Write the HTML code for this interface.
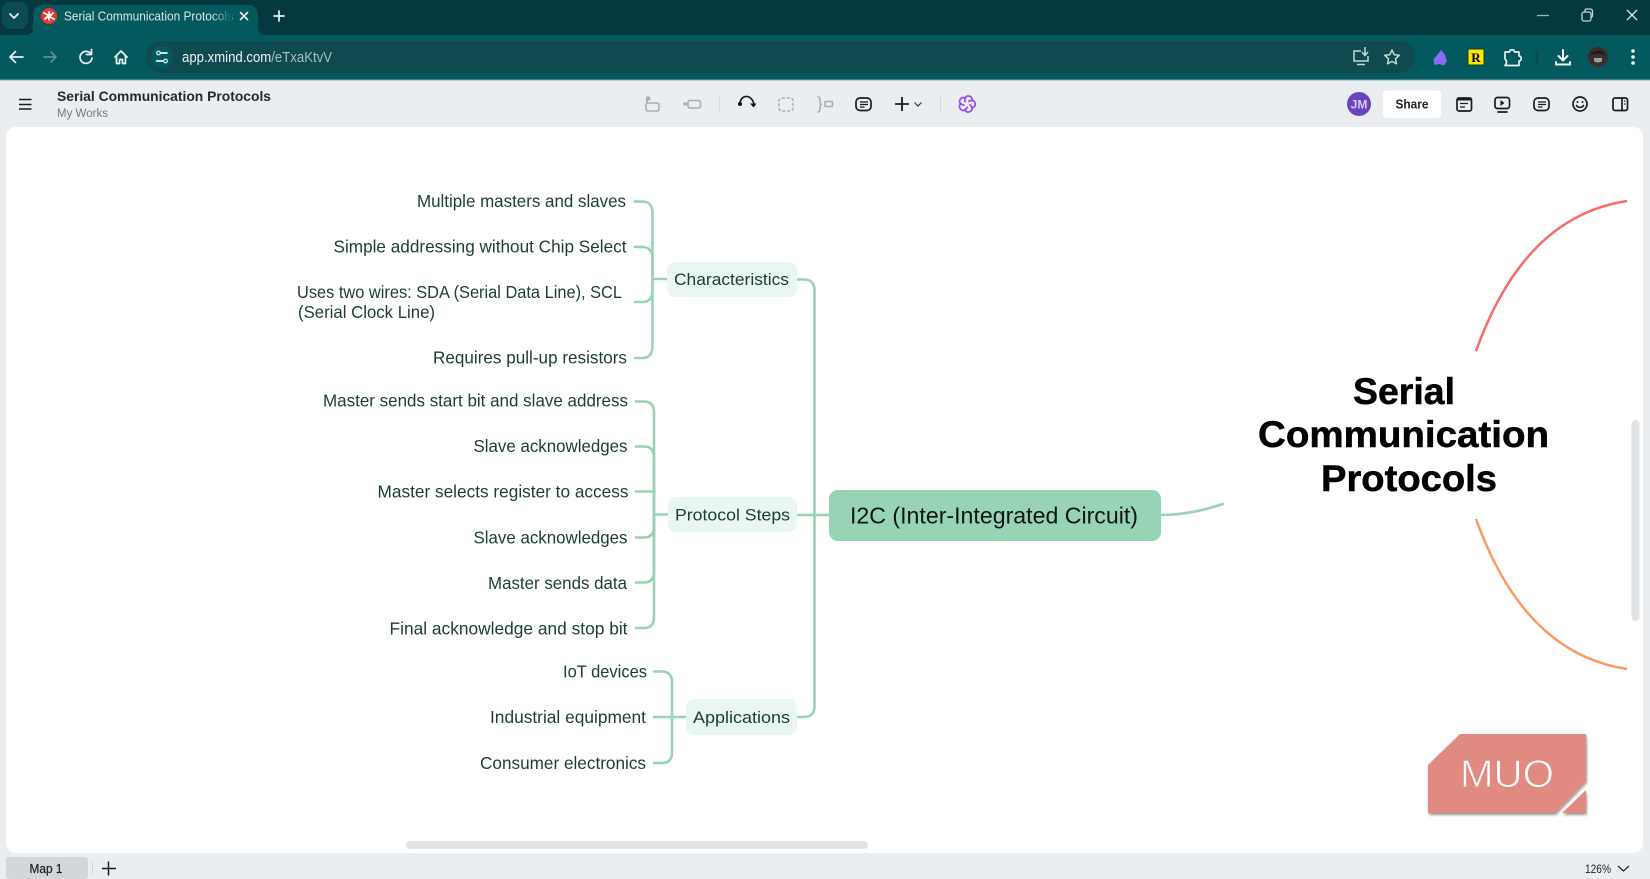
<!DOCTYPE html>
<html lang="en">
<head>
<meta charset="utf-8">
<title>Serial Communication Protocols</title>
<style>
html,body{margin:0;padding:0;width:1650px;height:879px;overflow:hidden;background:#ebeef1}
svg{display:block;font-family:"Liberation Sans",sans-serif}
.n{font-size:17.5px;fill:#1d3d33}
.b{font-size:17px;fill:#1d3d33}
.l{fill:none;stroke:#98d3b6;stroke-width:2.6;stroke-linecap:round;stroke-linejoin:round}
.g{fill:none;stroke:#a9adb0;stroke-width:1.6;stroke-linecap:round;stroke-linejoin:round}
.k{fill:none;stroke:#1b1b1b;stroke-width:1.7;stroke-linecap:round;stroke-linejoin:round}
.w{fill:none;stroke:#e9f1f1;stroke-width:1.7;stroke-linecap:round;stroke-linejoin:round}
</style>
</head>
<body>
<svg width="1650" height="879" viewBox="0 0 1650 879" xmlns="http://www.w3.org/2000/svg">
<defs>
<linearGradient id="fade" x1="0" x2="1" y1="0" y2="0"><stop offset="0" stop-color="#04595e" stop-opacity="0"/><stop offset="1" stop-color="#04595e"/></linearGradient>
<filter id="sh" x="-5%" y="-5%" width="112%" height="115%"><feDropShadow dx="1" dy="2" stdDeviation="1.2" flood-color="#000" flood-opacity=".4"/></filter>
</defs>

<!-- browser chrome -->
<rect width="1650" height="35" fill="#04393f"/>
<rect y="35" width="1650" height="45" fill="#04595e"/>
<rect y="79.5" width="1650" height="1" fill="#7fa9ab"/>
<rect x="2" y="2" width="26" height="27" rx="8" fill="#0a4c52"/>
<path d="M10 14l4 4 4-4" fill="none" stroke="#e9f1f1" stroke-width="1.8" stroke-linecap="round" stroke-linejoin="round"/>
<path d="M25 35c6 0 8-3 8-8V15c0-6 4-10 10-10h205c6 0 10 4 10 10v12c0 5 3 8 8 8z" fill="#04595e"/>
<circle cx="49" cy="16" r="8" fill="#e8392c"/>
<path d="M44 13l4 2 1 5M54 19l-4-2-1-5M45 19l3-3M50 16l3-3" fill="none" stroke="#fff" stroke-width="1.800" stroke-linecap="round"/>
<text x="64" y="20.500" font-size="12.500" fill="#d9e6e6" textLength="169" lengthAdjust="spacingAndGlyphs">Serial Communication Protocols</text>
<rect x="212" y="6" width="20" height="22" fill="url(#fade)"/>
<path d="M240.500 12.500l7 7M247.500 12.500l-7 7" class="w"/>
<path d="M279 11v10M274 16h10" class="w"/>
<path d="M1537 15.500h12" fill="none" stroke="#9ab5b7" stroke-width="1.300"/>
<rect x="1582" y="12" width="9" height="9" rx="2" fill="none" stroke="#c5d5d6" stroke-width="1.300"/>
<path d="M1585 12v-1.500c0-1 .7-1.500 1.500-1.500h4c1 0 2 1 2 2v4.500c0 1-.5 1.500-1.500 1.500" fill="none" stroke="#c5d5d6" stroke-width="1.300"/>
<path d="M1627 10l10 10M1637 10l-10 10" fill="none" stroke="#dbe6e6" stroke-width="1.300"/>

<path d="M10 57h13M10 57l5.500-5.500M10 57l5.500 5.500" class="w"/>
<path d="M44 57h12M56 57l-5-5M56 57l-5 5" fill="none" stroke="#5d8f92" stroke-width="1.700" stroke-linecap="round" stroke-linejoin="round"/>
<path d="M91 54a6 6 0 1 0 1 4M91.500 49.500v5h-5" class="w"/>
<path d="M115 57l6-6 6 6M116.500 56v7.500h3v-4h3v4h3V56" class="w"/>
<rect x="146" y="41" width="1269" height="32" rx="16" fill="#0e4a50"/>
<circle cx="162" cy="57" r="11" fill="#04595e"/>
<path d="M161 53h6M156.500 61h6" class="w" stroke-width="1.300"/>
<circle cx="158.500" cy="53" r="1.800" fill="none" stroke="#e9f1f1" stroke-width="1.200"/><circle cx="165.500" cy="61" r="1.800" fill="none" stroke="#e9f1f1" stroke-width="1.200"/>
<text x="182" y="62" font-size="14.500" textLength="150" lengthAdjust="spacingAndGlyphs"><tspan fill="#f0f5f5">app.xmind.com</tspan><tspan fill="#a6bfc1">/eTxaKtvV</tspan></text>

<path d="M1361 51h-7v10h14v-5" fill="none" stroke="#c9d6d7" stroke-width="1.500"/>
<path d="M1357 64.500h8M1365 47v8M1362 52l3 3.500 3-3.500" fill="none" stroke="#c9d6d7" stroke-width="1.500"/>
<path d="M1392 50l2.200 4.700 5.100.6-3.800 3.500 1 5.100-4.500-2.500-4.500 2.500 1-5.100-3.800-3.500 5.100-.6z" fill="none" stroke="#c9d6d7" stroke-width="1.500" stroke-linejoin="round"/>
<path d="M1441 50l3.500 4 2.500 7-3 4.500-5-1.500-4.500 1-1-5.500z" fill="#8a6cf0"/>
<rect x="1468" y="49" width="16" height="16" fill="#ffe600" stroke="#0b3a3e" stroke-width="1"/>
<text x="1476" y="62" text-anchor="middle" font-size="13" font-weight="700" font-family="Liberation Serif" fill="#000">R</text>
<path d="M1505 52h4.500c0-3 5-3 5 0h4.500v4c3 0 3 5 0 5v4.500h-14c2-2 2-5 0-6.500z" class="w"/>
<rect x="1536.500" y="50" width="1" height="15" fill="#0b3a3e"/>
<path d="M1563 50v10M1558.500 56l4.500 4.500 4.500-4.500M1556 62v2.500h14V62" fill="none" stroke="#f2f6f6" stroke-width="2" stroke-linecap="round" stroke-linejoin="round"/>
<circle cx="1598" cy="57" r="10" fill="#3a2e2a"/>
<path d="M1590 55c2-5 13-6 16 0-4-2-12-2-16 0z" fill="#1c1615"/>
<path d="M1594 58h8v3c-2 2-6 2-8 0z" fill="#9aa2a6"/>
<circle cx="1633" cy="51" r="1.800" fill="#eef4f4"/><circle cx="1633" cy="57" r="1.800" fill="#eef4f4"/><circle cx="1633" cy="63" r="1.800" fill="#eef4f4"/>

<!-- app bar -->
<rect y="80.500" width="1650" height="46.500" fill="#ebeef1"/>
<path d="M19 99.500h12.500M19 104.500h12.500M19 109h12.500" fill="none" stroke="#1b1b1b" stroke-width="1.500"/>
<text x="57" y="101" font-size="14" font-weight="700" fill="#26292b" textLength="214" lengthAdjust="spacingAndGlyphs">Serial Communication Protocols</text>
<text x="57" y="117" font-size="11.500" fill="#777b7e" textLength="51" lengthAdjust="spacingAndGlyphs">My Works</text>

<rect x="646" y="103" width="13" height="8" rx="2" class="g"/>
<path d="M647 103v-4.500h3" class="g"/><circle cx="648" cy="98.500" r="1.500" class="g"/>
<rect x="688" y="100.500" width="12.500" height="7.500" rx="2" class="g"/>
<circle cx="685" cy="104" r="1.700" fill="#a9adb0"/><path d="M685 104h3" class="g"/>
<rect x="719" y="96" width="1" height="16" fill="#d8dbde"/>
<path d="M740 103c1-9 12-9 14 1.500" class="k" stroke-width="2"/>
<circle cx="740" cy="104" r="2" fill="#111"/><path d="M750 103.500h6.500l-3 4z" fill="#111"/>
<rect x="779" y="98" width="14" height="13" rx="3" fill="none" stroke="#a9adb0" stroke-width="1.500" stroke-dasharray="3 1.800"/>
<path d="M818 97c3 0 1 4 2.500 6.500 1 1 .5 1.500-.5 1.500 1 0-.5 1 .5 1.500-1.500 2.500.5 5-2.500 5.500" class="g"/>
<rect x="825" y="101.500" width="7.500" height="5" rx="1" class="g"/>
<rect x="856" y="98" width="15" height="12.500" rx="4" class="k" stroke-width="1.800"/>
<path d="M860 102h8M860 104.500h8M860 107h4.500" fill="none" stroke="#1b1b1b" stroke-width="1.300"/>
<path d="M902 97v14M895 104h14" fill="none" stroke="#1b1b1b" stroke-width="1.800"/>
<path d="M914.500 102.500l3.500 3.500 3.500-3.500" fill="none" stroke="#333" stroke-width="1.200"/>
<rect x="940" y="96" width="1" height="16" fill="#d8dbde"/>
<g fill="none" stroke="#9b4ff2" stroke-width="1.700" stroke-linecap="round" transform="translate(967 104)">
<path id="pt" d="M-2-2.500C-3-6-1-8 1-8c3 0 5 2 4 5"/>
<path d="M-2-2.500C-3-6-1-8 1-8c3 0 5 2 4 5" transform="rotate(72)"/>
<path d="M-2-2.500C-3-6-1-8 1-8c3 0 5 2 4 5" transform="rotate(144)"/>
<path d="M-2-2.500C-3-6-1-8 1-8c3 0 5 2 4 5" transform="rotate(216)"/>
<path d="M-2-2.500C-3-6-1-8 1-8c3 0 5 2 4 5" transform="rotate(288)"/>
</g>

<circle cx="1359" cy="104" r="12" fill="#6a44bb"/>
<text x="1359" y="108.500" text-anchor="middle" font-size="12" font-weight="700" fill="#d8cdf0">JM</text>
<rect x="1383" y="90.500" width="58" height="27.500" rx="4" fill="#fff"/>
<text x="1412" y="108.500" text-anchor="middle" font-size="12.500" font-weight="700" fill="#222" textLength="33" lengthAdjust="spacingAndGlyphs">Share</text>
<rect x="1457" y="98" width="14.500" height="13" rx="2" class="k"/><path d="M1457 99h14.500" stroke="#1b1b1b" stroke-width="3"/><path d="M1460 103.500h8M1460 107h5" fill="none" stroke="#1b1b1b" stroke-width="1.200"/>
<rect x="1495" y="97.500" width="14.500" height="11" rx="2.500" class="k"/><path d="M1500.500 100l4 3-4 3z" fill="#1b1b1b"/><path d="M1498 112h9" class="k"/>
<rect x="1534" y="98" width="15" height="12.500" rx="4" class="k" stroke-width="1.800"/><path d="M1538 102h8M1538 104.500h8M1538 107h4.500" fill="none" stroke="#1b1b1b" stroke-width="1.200"/>
<circle cx="1580" cy="104" r="7" class="k"/><path d="M1576.500 105.500c1.500 2.500 5.500 2.500 7 0" class="k" stroke-width="1.300"/><circle cx="1577.500" cy="102" r="1" fill="#1b1b1b"/><circle cx="1582.500" cy="102" r="1" fill="#1b1b1b"/>
<rect x="1613" y="98" width="14.500" height="12.500" rx="2" class="k"/><path d="M1622 98v12.500" class="k"/><circle cx="1624.800" cy="101" r=".8" fill="#1b1b1b"/><circle cx="1624.800" cy="104" r=".8" fill="#1b1b1b"/>

<!-- canvas -->
<rect x="6" y="127" width="1637" height="726" rx="10" fill="#fff"/>

<!-- outer curves -->
<path d="M1627 201C1555 212 1507 265 1476 351" fill="none" stroke="#f96a6a" stroke-width="2.500"/>
<path d="M1476 519C1507 605 1555 658 1627 669" fill="none" stroke="#fb9a60" stroke-width="2.500"/>
<path d="M1161 515C1185 515 1205 510 1223 504" class="l"/>

<!-- connectors -->
<path class="l" d="M635 201.500h7c7 0 10.500 4 10.500 11V347c0 7-3.500 11-10.500 11h-7"/>
<path class="l" d="M635 247h7c7 0 10.500 4 10.500 11v33c0 7-3.500 11-10.500 11h-7"/>
<path class="l" d="M652.500 279H667"/>
<path class="l" d="M636 401.500h8c7 0 10 4 10 11V617c0 7-3 11-10 11h-8"/>
<path class="l" d="M636 446.500h8c7 0 10 4 10 11v69c0 7-3 11-10 11h-8"/>
<path class="l" d="M636 491.500h18M636 582.500h8c7 0 10-4 10-11v-57M654 514.500h14"/>
<path class="l" d="M654 671.500h8c7 0 10 4 10 11V752c0 7-3 11-10 11h-8"/>
<path class="l" d="M654 717h32"/>
<path class="l" d="M797 279.500h7c7 0 10.500 4 10.500 11V706c0 7-3.500 11-10.500 11h-7"/>
<path class="l" d="M797 515h32"/>

<!-- boxes -->
<rect x="829" y="490" width="332" height="51" rx="9" fill="#98d3b6"/>
<text x="850" y="523.500" font-size="23" fill="#0d1512" textLength="288" lengthAdjust="spacingAndGlyphs">I2C (Inter-Integrated Circuit)</text>
<rect x="667" y="262" width="130" height="35" rx="8" fill="#eaf6f0"/>
<text class="b" x="674" y="285" textLength="115" lengthAdjust="spacingAndGlyphs">Characteristics</text>
<rect x="668" y="497" width="129" height="35" rx="8" fill="#eaf6f0"/>
<text class="b" x="675" y="520.500" textLength="115" lengthAdjust="spacingAndGlyphs">Protocol Steps</text>
<rect x="686" y="699" width="111" height="36" rx="8" fill="#eaf6f0"/>
<text class="b" x="693" y="723" textLength="97" lengthAdjust="spacingAndGlyphs">Applications</text>

<!-- leaf text -->
<text class="n" x="417" y="207" textLength="209" lengthAdjust="spacingAndGlyphs">Multiple masters and slaves</text>
<text class="n" x="333.500" y="252.500" textLength="293" lengthAdjust="spacingAndGlyphs">Simple addressing without Chip Select</text>
<text class="n" x="297" y="298" textLength="325" lengthAdjust="spacingAndGlyphs">Uses two wires: SDA (Serial Data Line), SCL</text>
<text class="n" x="298" y="318" textLength="137" lengthAdjust="spacingAndGlyphs">(Serial Clock Line)</text>
<text class="n" x="433" y="363.500" textLength="194" lengthAdjust="spacingAndGlyphs">Requires pull-up resistors</text>
<text class="n" x="323" y="406.500" textLength="305" lengthAdjust="spacingAndGlyphs">Master sends start bit and slave address</text>
<text class="n" x="473.500" y="452" textLength="154" lengthAdjust="spacingAndGlyphs">Slave acknowledges</text>
<text class="n" x="377.500" y="497.500" textLength="251" lengthAdjust="spacingAndGlyphs">Master selects register to access</text>
<text class="n" x="473.500" y="543.500" textLength="154" lengthAdjust="spacingAndGlyphs">Slave acknowledges</text>
<text class="n" x="488" y="589" textLength="139" lengthAdjust="spacingAndGlyphs">Master sends data</text>
<text class="n" x="389.500" y="634.500" textLength="238" lengthAdjust="spacingAndGlyphs">Final acknowledge and stop bit</text>
<text class="n" x="563" y="677.500" textLength="84" lengthAdjust="spacingAndGlyphs">IoT devices</text>
<text class="n" x="490" y="723" textLength="156" lengthAdjust="spacingAndGlyphs">Industrial equipment</text>
<text class="n" x="480" y="769" textLength="166" lengthAdjust="spacingAndGlyphs">Consumer electronics</text>

<!-- central topic -->
<g font-size="37" font-weight="700" fill="#000" stroke="#000" stroke-width=".5">
<text x="1353" y="404" textLength="102" lengthAdjust="spacingAndGlyphs">Serial</text>
<text x="1258" y="447" textLength="291" lengthAdjust="spacingAndGlyphs">Communication</text>
<text x="1321" y="491" textLength="176" lengthAdjust="spacingAndGlyphs">Protocols</text>
</g>

<!-- scrollbars -->
<rect x="406" y="841" width="462" height="8" rx="4" fill="#e2e3e4"/>
<rect x="1631.500" y="420" width="8" height="201" rx="4" fill="#e2e3e4"/>

<!-- MUO badge -->
<g filter="url(#sh)" fill="#e08a82">
<path d="M1460 734h126v47l-31 32h-127v-48z"/>
<path d="M1586 790v23h-24z"/>
</g>
<text x="1460" y="787" font-size="39" fill="#fff" stroke="#e08a82" stroke-width=".9" textLength="94" lengthAdjust="spacingAndGlyphs">MUO</text>

<!-- bottom bar -->
<rect x="6" y="857" width="82" height="22" rx="3" fill="#d3d7da"/>
<text x="46" y="873" text-anchor="middle" font-size="12.500" fill="#222" stroke="#222" stroke-width=".25" textLength="33" lengthAdjust="spacingAndGlyphs">Map 1</text>
<rect x="92" y="862" width="1" height="12" fill="#d0d4d7"/>
<path d="M108.500 861.500v14M102 868.500h14" fill="none" stroke="#1b1b1b" stroke-width="1.500"/>
<text x="1585" y="873" font-size="12" fill="#222" textLength="26" lengthAdjust="spacingAndGlyphs">126%</text>
<path d="M1618 866l5.500 5 5.500-5" fill="none" stroke="#222" stroke-width="1.200"/>
</svg>
</body>
</html>
